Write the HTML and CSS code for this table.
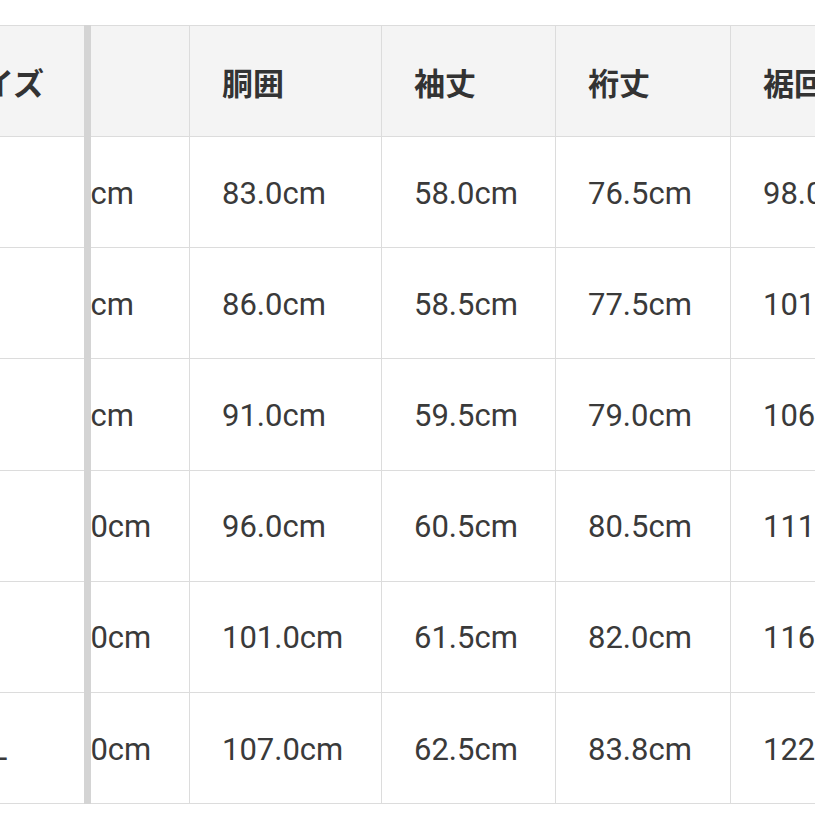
FILE: index.html
```html
<!DOCTYPE html>
<html lang="ja">
<head>
<meta charset="utf-8">
<title>サイズ表</title>
<link rel="stylesheet" href="styles.css">
</head>
<body>
<div class="sheet">
  <div class="frozen">
    <table class="size-table">
      <thead><tr><th>サイズ</th></tr></thead>
      <tbody>
        <tr><td>XS</td></tr>
        <tr><td>S</td></tr>
        <tr><td>M</td></tr>
        <tr><td>L</td></tr>
        <tr><td>XL</td></tr>
        <tr><td>XXL</td></tr>
      </tbody>
    </table>
  </div>
  <div class="scroller">
    <table class="size-table data">
      <thead>
        <tr>
          <th class="c-chest">胸囲</th>
          <th class="c-waist">胴囲</th>
          <th class="c-sleeve">袖丈</th>
          <th class="c-yuki">裄丈</th>
          <th class="c-hem">裾回り</th>
        </tr>
      </thead>
      <tbody>
        <tr><td>88.0cm</td><td>83.0cm</td><td>58.0cm</td><td>76.5cm</td><td>98.0cm</td></tr>
        <tr><td>93.0cm</td><td>86.0cm</td><td>58.5cm</td><td>77.5cm</td><td>101.0cm</td></tr>
        <tr><td>98.0cm</td><td>91.0cm</td><td>59.5cm</td><td>79.0cm</td><td>106.0cm</td></tr>
        <tr><td>103.0cm</td><td>96.0cm</td><td>60.5cm</td><td>80.5cm</td><td>111.0cm</td></tr>
        <tr><td>108.0cm</td><td>101.0cm</td><td>61.5cm</td><td>82.0cm</td><td>116.0cm</td></tr>
        <tr><td>114.0cm</td><td>107.0cm</td><td>62.5cm</td><td>83.8cm</td><td>122.0cm</td></tr>
      </tbody>
    </table>
  </div>
</div>
</body>
</html>
```
FILE: styles.css
```css
html, body {
  margin: 0;
  padding: 0;
  background: #ffffff;
  overflow: hidden;
}

body {
  width: 815px;
  height: 815px;
  font-family: Roboto, "Noto Sans CJK JP", sans-serif;
  color: #333333;
}

.sheet {
  display: flex;
  margin-top: 25px;
  margin-left: -80px;
  width: 895px;
}

.frozen {
  flex: 0 0 auto;
  border-right: 7px solid #d4d4d4;
}

.scroller {
  flex: 1 1 auto;
  overflow: hidden;
}

.size-table {
  border-collapse: separate;
  border-spacing: 0;
  table-layout: fixed;
  border-top: 1px solid #dcdcdc;
}

.size-table th,
.size-table td {
  box-sizing: border-box;
  height: 111.2px;
  padding: 2px 0 0 32px;
  border-bottom: 1px solid #dcdcdc;
  text-align: left;
  vertical-align: middle;
  white-space: nowrap;
  font-size: 31px;
  line-height: 1;
}

.size-table th {
  height: 111px;
  padding-top: 0;
  background: #f4f4f4;
  font-weight: 700;
  font-family: "Noto Sans CJK JP", Roboto, sans-serif;
  color: #333333;
}

.size-table td {
  font-weight: 400;
  color: #3a3a3a;
}

.frozen .size-table {
  width: 164px;
}

.frozen .size-table th,
.frozen .size-table td {
  width: 164px;
}

.data {
  margin-left: -93px;
  width: 923px;
}

.data th,
.data td {
  border-right: 1px solid #dcdcdc;
}

.data th.c-chest {
  padding-left: 26px;
}

.c-chest { width: 192px; }
.c-waist { width: 192px; }
.c-sleeve { width: 174px; }
.c-yuki { width: 175px; }
.c-hem { width: 190px; }
```
